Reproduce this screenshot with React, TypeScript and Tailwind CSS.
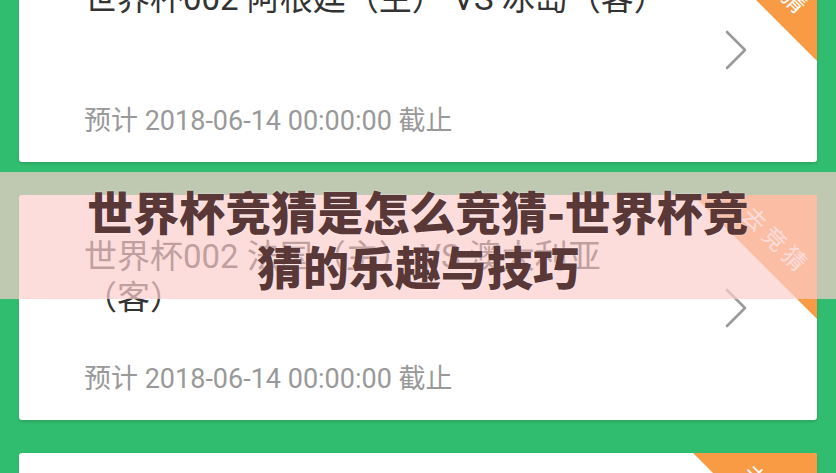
const matches = [
  { title: "世界杯002 阿根廷（主） VS 冰岛（客）", deadline: "预计 2018-06-14 00:00:00 截止" },
  { title: "世界杯002 法国（主） VS 澳大利亚（客）", deadline: "预计 2018-06-14 00:00:00 截止" },
  { title: "世界杯002 葡萄牙（主） VS 西班牙（客）", deadline: "预计 2018-06-14 00:00:00 截止" },
]

function Chevron() {
  return (
    <svg width="24" height="42" viewBox="0 0 24 42" fill="none">
      <polyline points="3,3 21,21 3,39" stroke="#9a9a9a" strokeWidth="2.6" strokeLinecap="round" strokeLinejoin="round" />
    </svg>
  )
}

function MatchCard({ title, deadline }: { title: string; deadline: string }) {
  return (
    <div className="relative flex h-[225px] overflow-hidden rounded-[3px] bg-white shadow-[0_2px_3px_rgba(0,0,0,0.12)]">
      {/* corner ribbon */}
      <div className="absolute right-0 top-0 h-[124px] w-[124px] bg-[#f99a45] [clip-path:polygon(0_0,100%_0,100%_100%)]">
        <span className="absolute left-[84px] top-[45px] -translate-x-1/2 -translate-y-1/2 rotate-45 whitespace-nowrap font-['Noto_Sans_CJK_SC',sans-serif] text-[23px] leading-none tracking-[5px] text-white">
          去竞猜
        </span>
      </div>

      <div className="flex flex-1 flex-col justify-between pb-[24px] pl-[65px] pt-[41px]">
        <div className="max-w-[576px] text-[33px] leading-[41px] text-[#333]">{title}</div>
        <div className="text-[27px] leading-[34px] text-[#999]">{deadline}</div>
      </div>

      <div className="flex items-center pr-[69px]">
        <Chevron />
      </div>
    </div>
  )
}

export default function App() {
  return (
    <div className="relative h-[473px] w-full overflow-hidden bg-[#31bd6f] font-['Roboto','Noto_Sans_CJK_SC',sans-serif]">
      <div className="-mt-[63px] flex flex-col gap-[33px] px-[19px]">
        {matches.map((m) => (
          <MatchCard key={m.title} title={m.title} deadline={m.deadline} />
        ))}
      </div>

      {/* title overlay */}
      <div className="absolute inset-x-0 top-[172px] flex h-[127px] items-center justify-center bg-[rgba(252,205,205,0.7)] pt-[4px]">
        <h1 className="text-center font-['Noto_Sans_CJK_SC',sans-serif] text-[46px] font-black leading-[55px] text-[#5a3838] [text-shadow:0_0_2px_rgba(255,255,255,0.7)]">
          世界杯竞猜是怎么竞猜-世界杯竞
          <br />
          猜的乐趣与技巧
        </h1>
      </div>
    </div>
  )
}
